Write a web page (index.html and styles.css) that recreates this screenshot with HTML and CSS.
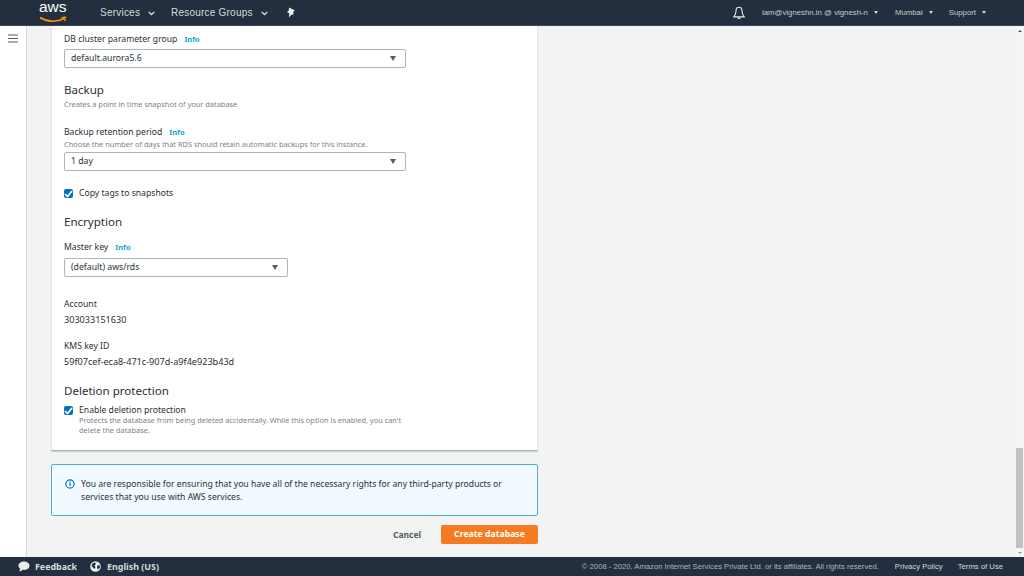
FILE: index.html
```html
<!DOCTYPE html>
<html lang="en">
<head>
<meta charset="utf-8">
<title>Create database</title>
<link rel="stylesheet" href="styles.css">
</head>
<body>
<header class="topbar">
  <div class="logo"><span class="logo-text">aws</span>
    <svg class="logo-smile" width="28" height="7" viewBox="0 0 28 7"><path d="M1 1.5C8 6 18 6.5 25 2.5" fill="none" stroke="#f90" stroke-width="1.5"/><path d="M22.5 1.5L26.5 1.2L25.5 5" fill="none" stroke="#f90" stroke-width="1.2"/></svg>
  </div>
  <nav class="nav-left">
    <span class="nav-item services">Services<svg class="chev" width="7" height="5" viewBox="0 0 7 5"><path d="M.7 1l2.8 2.6L6.3 1" fill="none" stroke="#d5dbdb" stroke-width="1.3"/></svg></span>
    <span class="nav-item groups">Resource Groups<svg class="chev" width="7" height="5" viewBox="0 0 7 5"><path d="M.7 1l2.8 2.6L6.3 1" fill="none" stroke="#d5dbdb" stroke-width="1.3"/></svg></span>
    <svg class="pin" width="10" height="11" viewBox="0 0 10 11"><path d="M3 .5L9 3.5 7.2 4.8 7.6 7.5 5.5 7.8 2.8 10.5 3.4 6.6 1 5 2.8 3.6Z" fill="#eaeded"/></svg>
  </nav>
  <nav class="nav-right">
    <svg class="bell" width="12" height="14" viewBox="0 0 12 14"><path d="M6 1.2C3.8 1.2 3 3 3 5c0 3-1 4.600-2.200 5.900h10.400C10 9.600 9 8 9 5c0-2-.8-3.800-3-3.800Z" fill="none" stroke="#eaeded" stroke-width="1.1"/><path d="M4.600 12.300h2.800" stroke="#eaeded" stroke-width="1.300"/></svg>
    <span class="top-link acct">iam@vigneshn.in @ vignesh-n<i class="caret"></i></span>
    <span class="top-link region">Mumbai<i class="caret"></i></span>
    <span class="top-link">Support<i class="caret"></i></span>
  </nav>
</header>

<div class="shell">
  <aside class="rail">
    <svg width="10" height="9" viewBox="0 0 10 9"><path d="M0 1h10M0 4.500h10M0 8h10" stroke="#545b64" stroke-width="1.200"/></svg>
  </aside>
  <main class="content">
    <section class="card">
      <div class="label-row first"><span class="label">DB cluster parameter group</span><span class="info">Info</span></div>
      <div class="select wide">default.aurora5.6<i class="sel-caret"></i></div>

      <h2 class="h-backup">Backup</h2>
      <p class="hint">Creates a point in time snapshot of your database</p>

      <div class="label-row retention"><span class="label">Backup retention period</span><span class="info">Info</span></div>
      <p class="hint">Choose the number of days that RDS should retain automatic backups for this instance.</p>
      <div class="select wide sel-day">1 day<i class="sel-caret"></i></div>

      <label class="check copy"><span class="box"><svg width="9" height="8" viewBox="0 0 9 8"><path d="M1 4l2.500 2.500L8 1" fill="none" stroke="#fff" stroke-width="1.600"/></svg></span><span class="label">Copy tags to snapshots</span></label>

      <h2 class="h-enc">Encryption</h2>
      <div class="label-row master"><span class="label">Master key</span><span class="info">Info</span></div>
      <div class="select narrow">(default) aws/rds<i class="sel-caret"></i></div>

      <div class="label account">Account</div>
      <div class="value">303033151630</div>
      <div class="label kms">KMS key ID</div>
      <div class="value">59f07cef-eca8-471c-907d-a9f4e923b43d</div>

      <h2 class="h-del">Deletion protection</h2>
      <div class="check del">
        <span class="box"><svg width="9" height="8" viewBox="0 0 9 8"><path d="M1 4l2.500 2.500L8 1" fill="none" stroke="#fff" stroke-width="1.600"/></svg></span>
        <div><div class="label">Enable deletion protection</div>
        <p class="hint del-hint">Protects the database from being deleted accidentally. While this option is enabled, you can't delete the database.</p></div>
      </div>
    </section>

    <section class="notice">
      <svg class="info-ic" width="10" height="10" viewBox="0 0 11 11"><circle cx="5.500" cy="5.500" r="4.600" fill="none" stroke="#0073bb" stroke-width="1.300"/><path d="M5.500 4.800v3" stroke="#0073bb" stroke-width="1.400"/><circle cx="5.500" cy="3.200" r=".8" fill="#0073bb"/></svg>
      <p>You are responsible for ensuring that you have all of the necessary rights for any third-party products or services that you use with AWS services.</p>
    </section>

    <div class="actions">
      <span class="cancel">Cancel</span>
      <span class="primary">Create database</span>
    </div>
  </main>
  <div class="scrollbar">
    <i class="arrow up"></i>
    <div class="track"><div class="thumb"></div></div>
    <i class="arrow down"></i>
  </div>
</div>

<footer class="footer">
  <svg class="fb-ic" width="12" height="11" viewBox="0 0 12 11"><path d="M6 .5c3 0 5.500 1.800 5.500 4.200S9 8.900 6 8.900c-.5 0-1 0-1.500-.1C3.500 9.800 2.300 10.300 1 10.300c.8-.7 1.200-1.500 1.300-2.500C1.100 7 .5 5.900.5 4.700.5 2.300 3 .5 6 .5Z" fill="#eaeded"/></svg>
  <span class="foot-strong feedback">Feedback</span>
  <svg class="globe" width="11" height="11" viewBox="0 0 11 11"><circle cx="5.500" cy="5.500" r="5.300" fill="#eaeded"/><path d="M2.500 2.500L5 1.500 6 3 4.500 4.500 5.500 6 4.500 8 3 6.500 1.500 5ZM7.500 4.500L9.500 4 10 6.500 8 8.500 7 6.500Z" fill="#232f3e"/></svg>
  <span class="foot-strong">English (US)</span>
  <span class="spacer"></span>
  <span class="copy-text">© 2008 - 2020, Amazon Internet Services Private Ltd. or its affiliates. All rights reserved.</span>
  <span class="foot-link privacy">Privacy Policy</span>
  <span class="foot-link">Terms of Use</span>
</footer>
</body>
</html>
```
FILE: styles.css
```css
* { box-sizing: border-box; }
html, body { margin: 0; height: 100%; overflow: hidden; }
body {
  display: flex;
  flex-direction: column;
  width: 1024px;
  height: 576px;
  font-family: "Noto Sans", sans-serif;
  color: #2b3036;
  background: #f2f3f3;
}
p, h2 { margin: 0; }
i { display: block; }

.topbar {
  flex: 0 0 26px;
  display: flex;
  align-items: center;
  background: #232f3e;
  border-bottom: 1px solid #3a4553;
  font-family: "Liberation Sans", sans-serif;
  padding-left: 39px;
}
.logo { width: 27px; height: 22px; position: relative; margin-top: -5px; }
.logo-text { display: block; color: #fff; font-size: 15.500px; line-height: 16px; font-family: "Liberation Sans", sans-serif; margin-top: 0; }
.logo-smile { display: block; margin-top: 1px; }
.nav-left { display: flex; align-items: center; margin-left: 34px; }
.nav-item { color: #d5dbdb; font-size: 10px; font-weight: 400; display: flex; align-items: center; letter-spacing: .22px; }
.chev { margin-left: 8px; margin-top: 1px; }
.services { width: 71px; }
.groups { width: 113px; }
.pin { margin-left: 2px; }
.nav-right { margin-left: auto; display: flex; align-items: center; color: #d5dbdb; }
.bell { margin-right: 17px; }
.top-link { font-size: 7.800px; display: flex; align-items: center; margin-right: 16px; color: #c4cbd1; }
.acct { margin-right: 17px; }
.region { margin-right: 16px; }
.top-link:last-child { margin-right: 38px; }
.caret { width: 0; height: 0; margin-left: 6px; border: 2.500px solid transparent; border-top: 3px solid #d5dbdb; border-bottom: 0; }

.shell { flex: 1 1 auto; display: flex; min-height: 0; }
.rail {
  flex: 0 0 27px;
  background: #fff;
  border-right: 1px solid #d5dbdb;
  padding: 8px 0 0 8px;
}
.rail svg { display: block; }
.content { flex: 0 0 511px; padding-left: 24px; min-width: 0; }

.card {
  width: 487px;
  height: 425px;
  background: #fff;
  border-bottom: 1px solid #aab7b8;
  border-left: 1px solid #e3e6e6;
  border-right: 1px solid #e3e6e6;
  box-shadow: 0 1px 1px rgba(0,28,36,.15);
  padding: 0 0 0 12px;
}
.label-row { display: flex; align-items: baseline; }
.label { font-size: 8.650px; line-height: 12px; color: #2b3036; }
.info { font-size: 7.500px; font-weight: 700; color: #12a7d0; margin-left: 7px; }
.first { padding-top: 7px; }
.select {
  position: relative;
  height: 19px;
  border: 1px solid #aab7b8;
  border-radius: 2px;
  font-size: 8.700px;
  line-height: 17px;
  padding-left: 6px;
  background: #fff;
}
.wide { width: 342px; }
.narrow { width: 224px; }
.sel-caret { position: absolute; right: 9px; top: 6px; border: 3.500px solid transparent; border-top: 5px solid #545b64; border-bottom: 0; }
.first + .select { margin-top: 4px; }
.h-backup, .h-enc, .h-del { font-size: 11.550px; font-weight: 400; line-height: 16px; color: #2b3036; }
.h-backup { margin-top: 14px; }
.hint { font-size: 7.420px; line-height: 10px; color: #7b838b; }
.h-backup + .hint { margin-top: 1px; }
.retention { margin-top: 17px; }
.retention + .hint { margin-top: 1px; }
.sel-day { margin-top: 3px; }
.check { display: flex; align-items: flex-start; }
.box { flex: 0 0 9px; width: 9px; height: 9px; background: #0073bb; border-radius: 2px; margin-right: 6px; margin-top: 2px; display: flex; align-items: center; justify-content: center; }
.copy { margin-top: 16px; }
.h-enc { margin-top: 15px; }
.master { margin-top: 11px; }
.master + .select { margin-top: 5px; }
.account { margin-top: 21px; }
.value { font-size: 9.100px; line-height: 12px; margin-top: 4px; }
.kms { margin-top: 14px; }
.h-del { margin-top: 15px; }
.del { margin-top: 5px; }
.del-hint { width: 335px; margin-top: -1px; }

.notice {
  display: flex;
  width: 487px;
  height: 52px;
  margin-top: 13px;
  background: #f1faff;
  border: 1px solid #55a9d9;
  border-radius: 2px;
  padding: 13px 13px 12px;
}
.info-ic { flex: 0 0 10px; margin-top: 1px; margin-right: 6px; }
.notice p { font-size: 8.650px; line-height: 13px; color: #2b3036; width: 440px; }

.actions { display: flex; align-items: center; justify-content: flex-end; width: 487px; margin-top: 9px; }
.cancel { font-size: 8.500px; font-weight: 700; color: #545b64; margin-right: 20px; }
.primary { width: 97px; height: 19px; background: #f47b20; color: #fff; font-size: 8.700px; font-weight: 700; line-height: 19px; text-align: center; border-radius: 2px; }

.scrollbar { margin-left: auto; flex: 0 0 9px; display: flex; flex-direction: column; background: #f4f5f5; padding-top: 3px; padding-bottom: 2px; }
.arrow { width: 0; height: 0; margin: 1px auto; border: 2px solid transparent; }
.up { border-bottom: 2.500px solid #555; border-top: 0; }
.down { border-top: 2.500px solid #999; border-bottom: 0; }
.track { flex: 1 1 auto; display: flex; flex-direction: column; justify-content: flex-end; padding: 1px 1px 3px; }
.thumb { height: 100px; background: #c1c1c1; }

.footer {
  flex: 0 0 19px;
  display: flex;
  align-items: center;
  background: #232f3e;
  padding-left: 18px;
  font-family: "Liberation Sans", sans-serif;
  color: #d5dbdb;
}
.fb-ic { margin-right: 5px; }
.foot-strong { font-size: 8.900px; font-weight: 700; font-family: "Noto Sans", sans-serif; color: #d5dbdb; }
.feedback { margin-right: 13px; }
.globe { margin-right: 6px; }
.spacer { flex: 1; }
.copy-text { font-size: 7.660px; color: #aab7b8; margin-right: 16px; }
.foot-link { font-size: 7.700px; }
.privacy { margin-right: 15px; }
.foot-link:last-child { margin-right: 21px; }
```
